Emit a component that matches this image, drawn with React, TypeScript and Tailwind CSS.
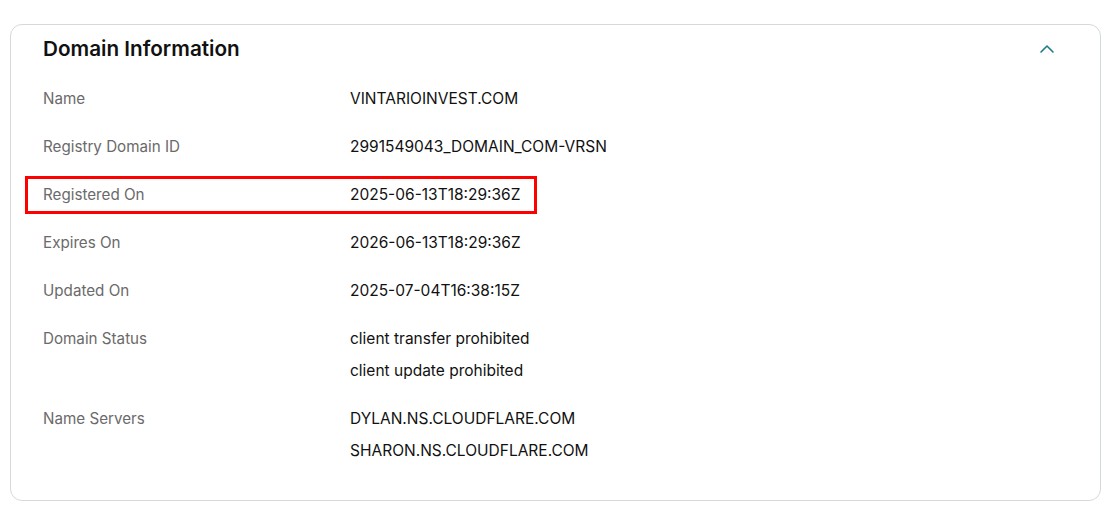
import { ReactNode } from "react";

type Row = { label: string; values: string[]; highlight?: boolean };

const rows: Row[] = [
  { label: "Name", values: ["VINTARIOINVEST.COM"] },
  { label: "Registry Domain ID", values: ["2991549043_DOMAIN_COM-VRSN"] },
  { label: "Registered On", values: ["2025-06-13T18:29:36Z"], highlight: true },
  { label: "Expires On", values: ["2026-06-13T18:29:36Z"] },
  { label: "Updated On", values: ["2025-07-04T16:38:15Z"] },
  { label: "Domain Status", values: ["client transfer prohibited", "client update prohibited"] },
  { label: "Name Servers", values: ["DYLAN.NS.CLOUDFLARE.COM", "SHARON.NS.CLOUDFLARE.COM"] },
];

function ChevronUp() {
  return (
    <svg width="16" height="10" viewBox="0 0 16 10" fill="none" className="mr-[-1px]">
      <path d="M2 8 L8 2 L14 8" stroke="#1b7d83" strokeWidth="1.6" strokeLinecap="round" strokeLinejoin="round" />
    </svg>
  );
}

function InfoRow({ row }: { row: Row }): ReactNode {
  return (
    <div className="relative flex py-2">
      {/* annotation box */}
      {row.highlight && (
        <div className="absolute left-[-18px] w-[512px] top-[5px] h-[38px] border-[3px] border-[#ff0000]" />
      )}
      <div className="w-[307px] shrink-0 text-[15.2px] leading-8 text-[#6a6a6a]">{row.label}</div>
      <div className="flex flex-col text-[15.5px] leading-8 text-[#111111]">
        {row.values.map((v) => (
          <span key={v}>{v}</span>
        ))}
      </div>
    </div>
  );
}

export default function App() {
  return (
    <div className="min-h-[509px] bg-white pt-[24px] px-[10px]" style={{ fontFamily: "Inter, 'Noto Sans', sans-serif" }}>
      <div className="rounded-[12px] border border-[#d4d9dc] pl-[32px] pr-[46px] pt-[10px] pb-[25px]">
        {/* Header */}
        <div className="flex items-center justify-between h-[28px]">
          <h2 className="text-[20.7px] leading-[28px] font-semibold text-[#111111]">Domain Information</h2>
          <ChevronUp />
        </div>

        {/* Rows */}
        <div className="mt-[12px] flex flex-col">
          {rows.map((r) => (
            <InfoRow key={r.label} row={r} />
          ))}
        </div>
      </div>
    </div>
  );
}
